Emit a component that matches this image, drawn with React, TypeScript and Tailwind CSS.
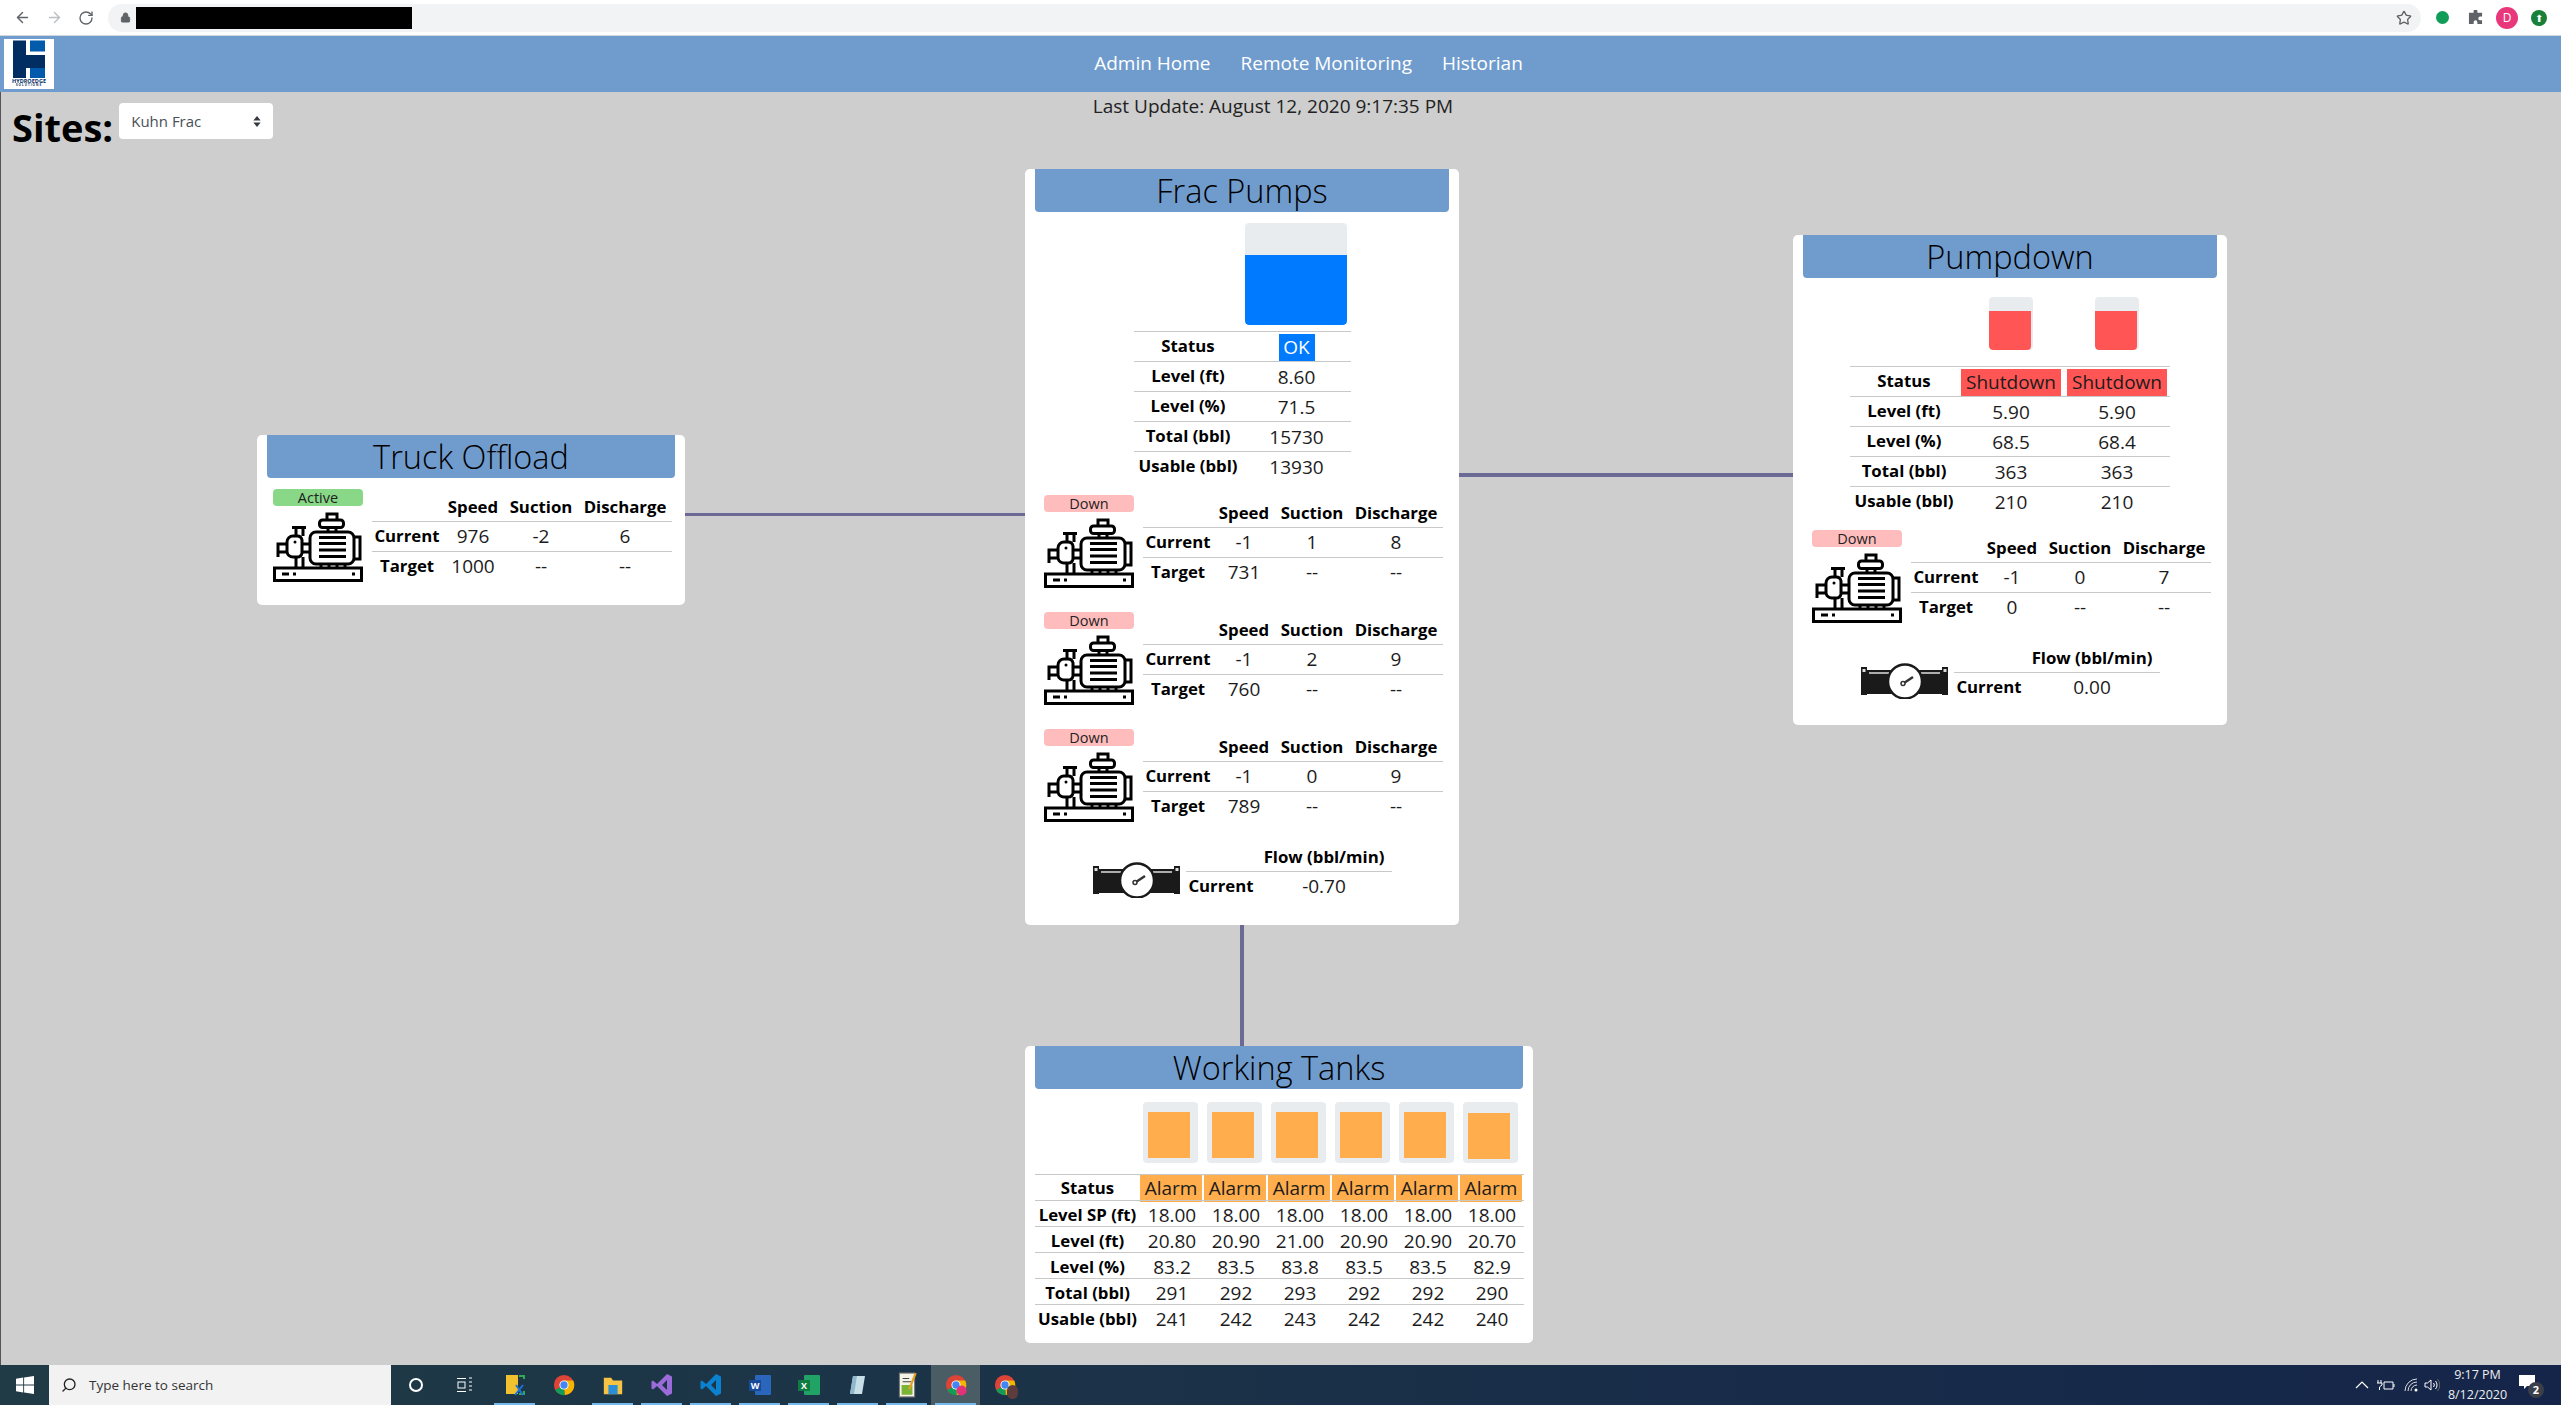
import { ArrowLeft, ArrowRight, Lock, RotateCw, Search, Star } from 'lucide-react'

type Pump = {
  status: string
  badge: string
  current: string[]
  target: string
}

const PumpIcon = () => (
  <svg viewBox="0 0 90 70" className="h-[70px] w-[90px]" fill="none" stroke="#000" strokeWidth="3">
    <rect x="1.5" y="56" width="87" height="12.5" />
    <path d="M9 62h7M20 62h3M79 62h3" strokeWidth="3" />
    <rect x="37" y="20" width="44" height="32" rx="6" />
    <path d="M46 25.5h27M46 31.5h27M46 38h27M46 44.5h27" strokeWidth="3" />
    <path d="M81 25h6v22h-6" />
    <rect x="46.5" y="8" width="24" height="7.5" rx="3" />
    <path d="M54 8V2h10v6M55 15.5V20M63 15.5V20" />
    <path d="M29 32V28a5 5 0 0 0-5-4h-4a6 6 0 0 0-6 6v10a6 6 0 0 0 6 5h4a5 5 0 0 0 5-4Z" />
    <path d="M29 32h8M29 40h8" />
    <path d="M14 32H5v13M5 40h9" />
    <path d="M19 15.5h14M23 15.5V24M30 15.5V24M23 45v11M30 45v11" />
    <path d="M48 52v4M56 52v4M64 52v4M72 52v4" />
    <circle cx="22" cy="30" r="1.5" fill="#000" stroke="none" />
  </svg>
)

const FlowIcon = () => (
  <svg viewBox="0 0 87 37" className="h-[37px] w-[87px]">
    <rect x="0" y="5" width="6" height="28" fill="#1a1a1a" />
    <rect x="81" y="5" width="6" height="28" fill="#1a1a1a" />
    <rect x="6" y="8" width="75" height="24" fill="#1a1a1a" />
    <path d="M8 11h20M60 11h19" stroke="#ddd" strokeWidth="1.5" />
    <rect x="1.5" y="7" width="3" height="3" fill="#ddd" />
    <rect x="82.5" y="7" width="3" height="3" fill="#ddd" />
    <circle cx="44" cy="19.5" r="17" fill="#fff" stroke="#1a1a1a" strokeWidth="2.5" />
    <path d="M43 21l9-6" stroke="#333" strokeWidth="2.5" />
    <circle cx="42" cy="21.5" r="2" fill="#fff" stroke="#333" strokeWidth="1.5" />
  </svg>
)

const Label = ({ children }: { children: React.ReactNode }) => (
  <span className="text-center text-[16.8px] leading-none font-bold text-black">{children}</span>
)

const PumpRow = ({ pump }: { pump: Pump }) => (
  <div className="flex h-[117px] items-start gap-[9px]">
    <div className="flex w-[90px] flex-col">
      <div className={`h-[17px] rounded-[4px] text-center text-[14.5px] leading-[17px] text-[#222] ${pump.badge}`}>{pump.status}</div>
      <div className="mt-[6px] flex"><PumpIcon /></div>
    </div>
    <div className="grid w-[300px] grid-cols-[70px_62px_74px_94px] grid-rows-[32px_30px_30px] items-center text-center text-[19px] text-[#1c1c1c]">
      <span />
      <span className="pt-[2px]"><Label>Speed</Label></span>
      <span className="pt-[2px]"><Label>Suction</Label></span>
      <span className="pt-[2px]"><Label>Discharge</Label></span>
      <span className="col-span-4 grid h-full grid-cols-subgrid items-center border-t border-[#c8c8c8]">
        <Label>Current</Label>
        {pump.current.map((v, i) => (
          <span key={i}>{v}</span>
        ))}
      </span>
      <span className="col-span-4 grid h-full grid-cols-subgrid items-center border-t border-[#c8c8c8]">
        <Label>Target</Label>
        <span>{pump.target}</span>
        <span>--</span>
        <span>--</span>
      </span>
    </div>
  </div>
)

const FlowRow = ({ value }: { value: string }) => (
  <div className="flex items-start gap-[6px]">
    <div className="mt-[17px] flex"><FlowIcon /></div>
    <div className="grid w-[206px] grid-cols-[70px_136px] grid-rows-[27px_30px] items-center text-center text-[19px] text-[#1c1c1c]">
      <span />
      <span className="pb-[3px]"><Label>Flow (bbl/min)</Label></span>
      <span className="col-span-2 grid h-full grid-cols-subgrid items-center border-t border-[#c8c8c8]">
        <Label>Current</Label>
        <span>{value}</span>
      </span>
    </div>
  </div>
)

const Card = ({ title, className, children }: { title: string; className: string; children: React.ReactNode }) => (
  <div className={`absolute rounded-[5px] bg-white px-[10px] ${className}`}>
    <div className="h-[43px] rounded-b-[4px] bg-[#709ccd] text-center text-[32.5px] leading-[43px] font-light text-black">{title}</div>
    {children}
  </div>
)

const Cell = ({ children, className = '' }: { children: React.ReactNode; className?: string }) => (
  <span className={`flex h-full items-center justify-center ${className}`}>{children}</span>
)

const TankTable = ({
  rows,
  columns,
}: {
  rows: { label: string; values: string[]; cell?: string }[]
  columns: string
}) => (
  <div className={`grid auto-rows-[30px] text-center text-[19px] text-[#1c1c1c] ${columns}`}>
    {rows.map((row) => (
      <div key={row.label} className="col-span-full grid h-full grid-cols-subgrid items-center border-t border-[#c8c8c8]">
        <Label>{row.label}</Label>
        {row.values.map((v, i) => (
          <Cell key={i} className="pt-[1px]">{row.cell ? <span className={row.cell}>{v}</span> : v}</Cell>
        ))}
      </div>
    ))}
  </div>
)

const downPump = (current: string[], target: string): Pump => ({
  status: 'Down',
  badge: 'bg-[#ffbcbc]',
  current,
  target,
})

const WORKING = [
  { sp: '18.00', ft: '20.80', pct: '83.2', total: '291', usable: '241', top: 10 },
  { sp: '18.00', ft: '20.90', pct: '83.5', total: '292', usable: '242', top: 10 },
  { sp: '18.00', ft: '21.00', pct: '83.8', total: '293', usable: '243', top: 10 },
  { sp: '18.00', ft: '20.90', pct: '83.5', total: '292', usable: '242', top: 10 },
  { sp: '18.00', ft: '20.90', pct: '83.5', total: '292', usable: '242', top: 10 },
  { sp: '18.00', ft: '20.70', pct: '82.9', total: '290', usable: '240', top: 11 },
]

const Chrome = ({ bottom }: { bottom?: boolean }) => (
  <svg viewBox="0 0 24 24" className="h-[22px] w-[22px]">
    <circle cx="12" cy="12" r="11" fill="#db4437" />
    <path d="M12 12 2.5 17.5A11 11 0 0 0 13 23Z" fill="#0f9d58" />
    <path d="M12 7h10a11 11 0 0 1-9 16Z" fill="#f4b400" />
    <circle cx="12" cy="12" r="5" fill="#fff" />
    <circle cx="12" cy="12" r="4" fill="#4285f4" />
    {bottom && <circle cx="18" cy="18" r="5.5" fill="#e0337a" />}
  </svg>
)

const TaskIcon = ({ children, active, underline }: { children: React.ReactNode; active?: boolean; underline?: boolean }) => (
  <div className={`relative flex h-full w-[49px] items-center justify-center ${active ? 'bg-[#4a5c64]' : ''}`}>
    {children}
    {underline && <div className="absolute right-[4px] bottom-0 left-[4px] h-[2px] bg-[#76b9ed]" />}
  </div>
)

const Taskbar = () => (
  <div className="flex h-[40px] items-stretch bg-gradient-to-r from-[#203b45] to-[#15254a] text-white">
    <div className="flex w-[49px] items-center justify-center">
      <svg viewBox="0 0 20 20" className="h-[18px] w-[18px]" fill="#fff">
        <path d="M0 3l8-1.2V9.500H0ZM9 1.600 20 0v9.500H9ZM0 10.500h8v7.700L0 17ZM9 10.500h11V20L9 18.400Z" />
      </svg>
    </div>
    <div className="flex w-[342px] items-center gap-[12px] bg-[#f2f2f2] pl-[12px] text-[13.5px] text-[#333] [font-family:'Open_Sans',sans-serif]">
      <Search className="h-[16px] w-[16px] -scale-x-100 text-[#222]" />
      Type here to search
    </div>
    <div className="flex w-[50px] items-center justify-center">
      <div className="h-[14px] w-[14px] rounded-full border-2 border-white" />
    </div>
    <div className="flex w-[48px] items-center justify-center">
      <svg viewBox="0 0 16 16" className="h-[16px] w-[16px]" fill="none" stroke="#fff" strokeWidth="1">
        <path d="M0 1.500h9M0 14.500h9M12 1h3M12 5h3M12 9h3M12 13h3" />
        <rect x="1" y="5" width="7" height="6" />
      </svg>
    </div>
    <div className="ml-[1px] flex">
      <TaskIcon underline>
        <svg viewBox="0 0 24 24" className="h-[24px] w-[24px]">
          <rect x="3" y="2" width="12" height="19" fill="#f2c12e" />
          <path d="M16 3h5v3M21 18v3h-5M3 21" stroke="#35a853" strokeWidth="2" fill="none" />
          <path d="m12 22 8-10M13 12l7 10" stroke="#1a73d8" strokeWidth="2" />
        </svg>
      </TaskIcon>
      <TaskIcon><Chrome /></TaskIcon>
      <TaskIcon underline>
        <svg viewBox="0 0 24 24" className="h-[22px] w-[22px]">
          <path d="M2 4h8l2 3h10v15H2Z" fill="#f6c343" />
          <rect x="7" y="12" width="10" height="10" fill="#2a8fd6" />
        </svg>
      </TaskIcon>
      <TaskIcon underline>
        <svg viewBox="0 0 24 24" className="h-[24px] w-[24px]">
          <path d="M17 1 22 3.500v17L17 23 7 13l-4 3.500-1.500-1v-7L3 7.500 7 11Zm0 6-5 5 5 5Z" fill="#9b6bd9" />
        </svg>
      </TaskIcon>
      <TaskIcon underline>
        <svg viewBox="0 0 24 24" className="h-[24px] w-[24px]">
          <path d="M17 1 22 3.500v17L17 23 7 13l-4 3.500-1.500-1v-7L3 7.500 7 11Zm0 6-5 5 5 5Z" fill="#0a82d0" />
        </svg>
      </TaskIcon>
      <TaskIcon underline>
        <svg viewBox="0 0 24 24" className="h-[24px] w-[24px]">
          <rect x="7" y="2" width="16" height="20" rx="1" fill="#2b66bd" />
          <rect x="1" y="7" width="12" height="11" fill="#184a9c" />
          <text x="7" y="16" textAnchor="middle" fontSize="9" fontWeight="700" fill="#fff">W</text>
        </svg>
      </TaskIcon>
      <TaskIcon underline>
        <svg viewBox="0 0 24 24" className="h-[24px] w-[24px]">
          <rect x="7" y="2" width="16" height="20" rx="1" fill="#21a366" />
          <rect x="1" y="7" width="12" height="11" fill="#107c41" />
          <text x="7" y="16" textAnchor="middle" fontSize="9" fontWeight="700" fill="#fff">X</text>
        </svg>
      </TaskIcon>
      <TaskIcon underline>
        <svg viewBox="0 0 24 24" className="h-[24px] w-[24px]">
          <path d="M7 3h12l-3 18H4Z" fill="#c9dfe8" />
          <path d="M7 3h4L8 21H4Z" fill="#8eb8cc" />
        </svg>
      </TaskIcon>
      <TaskIcon underline>
        <svg viewBox="0 0 24 24" className="h-[26px] w-[26px]">
          <rect x="5" y="1" width="14" height="22" fill="#f3f3e8" stroke="#777" />
          <rect x="7" y="12" width="10" height="9" fill="#7bb334" />
          <path d="M8 6h6M8 9h8" stroke="#444" />
          <path d="m14 16 6-15" stroke="#e8a020" strokeWidth="2" />
        </svg>
      </TaskIcon>
      <TaskIcon active underline><Chrome bottom /></TaskIcon>
      <TaskIcon>
        <div className="relative">
          <Chrome />
          <div className="absolute -right-[2px] -bottom-[3px] h-[14px] w-[11px] rounded-full bg-[#5c3c3c]" />
        </div>
      </TaskIcon>
    </div>
    <div className="ml-auto flex items-center">
      <svg viewBox="0 0 14 8" className="mr-[8px] h-[8px] w-[14px]" fill="none" stroke="#fff" strokeWidth="1.2"><path d="m1 7 6-6 6 6" /></svg>
      <svg viewBox="0 0 18 12" className="mr-[9px] h-[12px] w-[18px]" fill="none" stroke="#fff"><path d="M1 1v3M4 1v3M0 4h5v2L2.500 8v3M7 3h9v7H7Z" /><path d="M17 5v3" /></svg>
      <svg viewBox="0 0 14 14" className="mr-[6px] h-[14px] w-[14px]" fill="none" stroke="#ddd"><path d="M1 13A12 12 0 0 1 13 1M4 13A9 9 0 0 1 13 4M7 13a6 6 0 0 1 6-6" /><circle cx="12" cy="12" r="1.500" fill="#fff" stroke="none" /></svg>
      <svg viewBox="0 0 16 14" className="h-[14px] w-[16px]" fill="none" stroke="#fff"><path d="M1 5h2.500L7 2v10L3.500 9H1ZM9.500 5a3 3 0 0 1 0 4M11.500 3a6 6 0 0 1 0 8" /><path d="M13.500 1a9 9 0 0 1 0 12" stroke="#666" /></svg>
      <div className="ml-[5px] w-[65px] text-center text-[12.5px] leading-[20px] text-[#eee] [font-family:'Open_Sans',sans-serif]">
        <div>9:17 PM</div>
        <div>8/12/2020</div>
      </div>
      <div className="relative mr-[18px] ml-[9px] h-[24px] w-[24px]">
        <svg viewBox="0 0 16 14" className="mt-[2px] h-[14px] w-[16px]" fill="#fff"><path d="M0 0h16v11H8l-3 3v-3H0Z" /></svg>
        <div className="absolute right-[-1px] bottom-[-1px] flex h-[16px] w-[16px] items-center justify-center rounded-full bg-[#3a3f4a] text-[11px] font-bold text-white [font-family:'Open_Sans',sans-serif]">2</div>
      </div>
    </div>
  </div>
)

export default function App() {
  return (
    <div className="flex h-[1405px] w-[2561px] flex-col overflow-hidden bg-[#cecece] [font-family:'Open_Sans','Noto_Sans',sans-serif]">
      <div className="flex h-[36px] items-center border-b border-[#cfd6de] bg-white">
        <ArrowLeft className="ml-[14px] h-[17px] w-[17px] text-[#5f6368]" />
        <ArrowRight className="ml-[15px] h-[17px] w-[17px] text-[#bdbfc2]" />
        <RotateCw className="ml-[15px] h-[16px] w-[16px] text-[#5f6368]" />
        <div className="ml-[14px] flex h-[28px] w-[2313px] items-center rounded-full bg-[#f1f3f4]">
          <Lock className="ml-[12px] h-[11px] w-[11px] fill-[#5f6368] text-[#5f6368]" />
          <div className="ml-[5px] h-[22px] w-[276px] bg-black" />
          <Star className="ml-auto mr-[9px] h-[16px] w-[16px] text-[#5f6368]" />
        </div>
        <div className="ml-[15px] h-[13px] w-[13px] rounded-full bg-[#0f9d58]" />
        <svg viewBox="0 0 16 16" className="ml-[19px] h-[15px] w-[15px]" fill="#5f6368"><path d="M6 1a2 2 0 0 1 4 0v2h5v4h-2a2 2 0 0 0 0 4h2v4h-5v-2a2 2 0 0 0-4 0v2H1V3h5Z" /></svg>
        <div className="ml-[13px] flex h-[22px] w-[22px] items-center justify-center rounded-full bg-[#e8377a] text-[12px] text-white">D</div>
        <div className="ml-[13px] flex h-[16px] w-[16px] items-center justify-center rounded-full bg-[#188038] text-[10px] leading-none text-white">⬆</div>
      </div>

      <div className="relative flex h-[56px] items-center justify-center gap-[30px] bg-[#709ccd] pb-[2px] pl-[56px] text-[19px] text-white">
        <div className="absolute top-[3px] left-[4px] flex h-[50px] w-[50px] flex-col items-center bg-white">
          <svg viewBox="0 0 50 39" className="h-[39px] w-[50px]">
            <path d="M9 1.500h13V16h19v13H22v10H9Z" fill="#002d62" />
            <rect x="26" y="1.500" width="15" height="11" fill="#005bac" />
            <rect x="26" y="29" width="15" height="10" fill="#005bac" />
          </svg>
          <span className="text-[5.5px] leading-[6px] font-bold text-[#002d62]">HYDROEDGE</span>
          <span className="text-[3px] leading-[3px] font-bold tracking-[1px] text-[#002d62]">SOLUTIONS</span>
        </div>
        <span>Admin Home</span>
        <span>Remote Monitoring</span>
        <span>Historian</span>
      </div>

      <div className="relative flex-1 border-l border-[#555]">
        <div className="flex items-start pl-[11px]">
          <span className="mt-[14px] text-[38px] leading-[42px] font-bold text-black">Sites:</span>
          <div className="mt-[11px] ml-[6px] flex h-[36px] w-[154px] items-center justify-between rounded-[4px] bg-white pr-[12px] pl-[12px] text-[15px] text-[#495057]">
            Kuhn Frac
            <svg viewBox="0 0 8 12" className="h-[11px] w-[8px]" fill="#343a40"><path d="M4 0l4 5H0ZM4 12 0 7h8Z" /></svg>
          </div>
          <span className="absolute top-[0px] left-0 w-[2544px] text-center text-[19px] text-[#222]">Last Update: August 12, 2020 9:17:35 PM</span>
        </div>

        <div className="absolute top-[421px] left-[684px] h-[3px] w-[341px] bg-[#6a6a94]" />
        <div className="absolute top-[381px] left-[1458px] h-[4px] w-[335px] bg-[#6a6a94]" />
        <div className="absolute top-[833px] left-[1239px] h-[121px] w-[4px] bg-[#6a6a94]" />

        <Card title="Truck Offload" className="top-[343px] left-[256px] h-[170px] w-[428px]">
          <div className="mt-[11px] ml-[6px]">
            <PumpRow pump={{ status: 'Active', badge: 'bg-[#88d888]', current: ['976', '-2', '6'], target: '1000' }} />
          </div>
        </Card>

        <Card title="Frac Pumps" className="top-[77px] left-[1024px] h-[756px] w-[434px]">
          <div className="mt-[11px] ml-[210px] h-[102px] w-[102px] overflow-hidden rounded-[4px] bg-[#e9ecef]">
            <div className="mt-[32px] h-[70px] rounded-b-[4px] bg-[#007bff]" />
          </div>
          <div className="mt-[6px] ml-[99px] w-[217px]">
            <TankTable
              columns="grid-cols-[108px_109px]"
              rows={[
                { label: 'Status', values: ['OK'], cell: 'flex h-[27px] w-[36px] items-center justify-center bg-[#007bff] text-white' },
                { label: 'Level (ft)', values: ['8.60'] },
                { label: 'Level (%)', values: ['71.5'] },
                { label: 'Total (bbl)', values: ['15730'] },
                { label: 'Usable (bbl)', values: ['13930'] },
              ]}
            />
          </div>
          <div className="mt-[14px] ml-[9px]">
            <PumpRow pump={downPump(['-1', '1', '8'], '731')} />
            <PumpRow pump={downPump(['-1', '2', '9'], '760')} />
            <PumpRow pump={downPump(['-1', '0', '9'], '789')} />
          </div>
          <div className="mt-[-2px] ml-[58px]">
            <FlowRow value="-0.70" />
          </div>
        </Card>

        <Card title="Pumpdown" className="top-[143px] left-[1792px] h-[490px] w-[434px]">
          <div className="mt-[19px] ml-[186px] flex gap-[62px]">
            {[0, 1].map((i) => (
              <div key={i} className="h-[53px] w-[44px] overflow-hidden rounded-[4px] bg-[#e9ecef]">
                <div className="mt-[14px] h-[39px] w-[42px] rounded-b-[4px] bg-[#ff5555]" />
              </div>
            ))}
          </div>
          <div className="mt-[16px] ml-[47px] w-[320px]">
            <TankTable
              columns="grid-cols-[108px_106px_106px]"
              rows={[
                { label: 'Status', values: ['Shutdown', 'Shutdown'], cell: 'flex h-[27px] w-[100px] items-center justify-center bg-[#ff5555]' },
                { label: 'Level (ft)', values: ['5.90', '5.90'] },
                { label: 'Level (%)', values: ['68.5', '68.4'] },
                { label: 'Total (bbl)', values: ['363', '363'] },
                { label: 'Usable (bbl)', values: ['210', '210'] },
              ]}
            />
          </div>
          <div className="mt-[14px] ml-[9px]">
            <PumpRow pump={downPump(['-1', '0', '7'], '0')} />
          </div>
          <div className="mt-[-2px] ml-[58px]">
            <FlowRow value="0.00" />
          </div>
        </Card>

        <Card title="Working Tanks" className="top-[954px] left-[1024px] h-[297px] w-[508px]">
          <div className="mt-[13px] ml-[108px] flex gap-[9px]">
            {WORKING.map((t, i) => (
              <div key={i} className="h-[61px] w-[55px] rounded-[4px] bg-[#e9ecef] pr-[8px] pl-[5px]" style={{ paddingTop: t.top }}>
                <div className="h-[46px] bg-[#ffad4d]" />
              </div>
            ))}
          </div>
          <div className="mt-[11px] grid grid-cols-[105px_repeat(6,64px)] auto-rows-[26px] items-center text-center text-[19px] text-[#1c1c1c]">
            <div className="col-span-full grid h-full grid-cols-subgrid items-center border-t border-[#c8c8c8]">
              <Label>Status</Label>
              {WORKING.map((_, i) => (
                <span key={i} className="mr-[2px] flex h-[27px] items-center justify-center bg-[#ffad4d]">Alarm</span>
              ))}
            </div>
            {[
              { label: 'Level SP (ft)', key: 'sp' as const },
              { label: 'Level (ft)', key: 'ft' as const },
              { label: 'Level (%)', key: 'pct' as const },
              { label: 'Total (bbl)', key: 'total' as const },
              { label: 'Usable (bbl)', key: 'usable' as const },
            ].map((row) => (
              <div key={row.label} className="col-span-full grid h-full grid-cols-subgrid items-center border-t border-[#c8c8c8]">
                <Label>{row.label}</Label>
                {WORKING.map((t, i) => (
                  <span key={i}>{t[row.key]}</span>
                ))}
              </div>
            ))}
          </div>
        </Card>
      </div>

      <Taskbar />
    </div>
  )
}
